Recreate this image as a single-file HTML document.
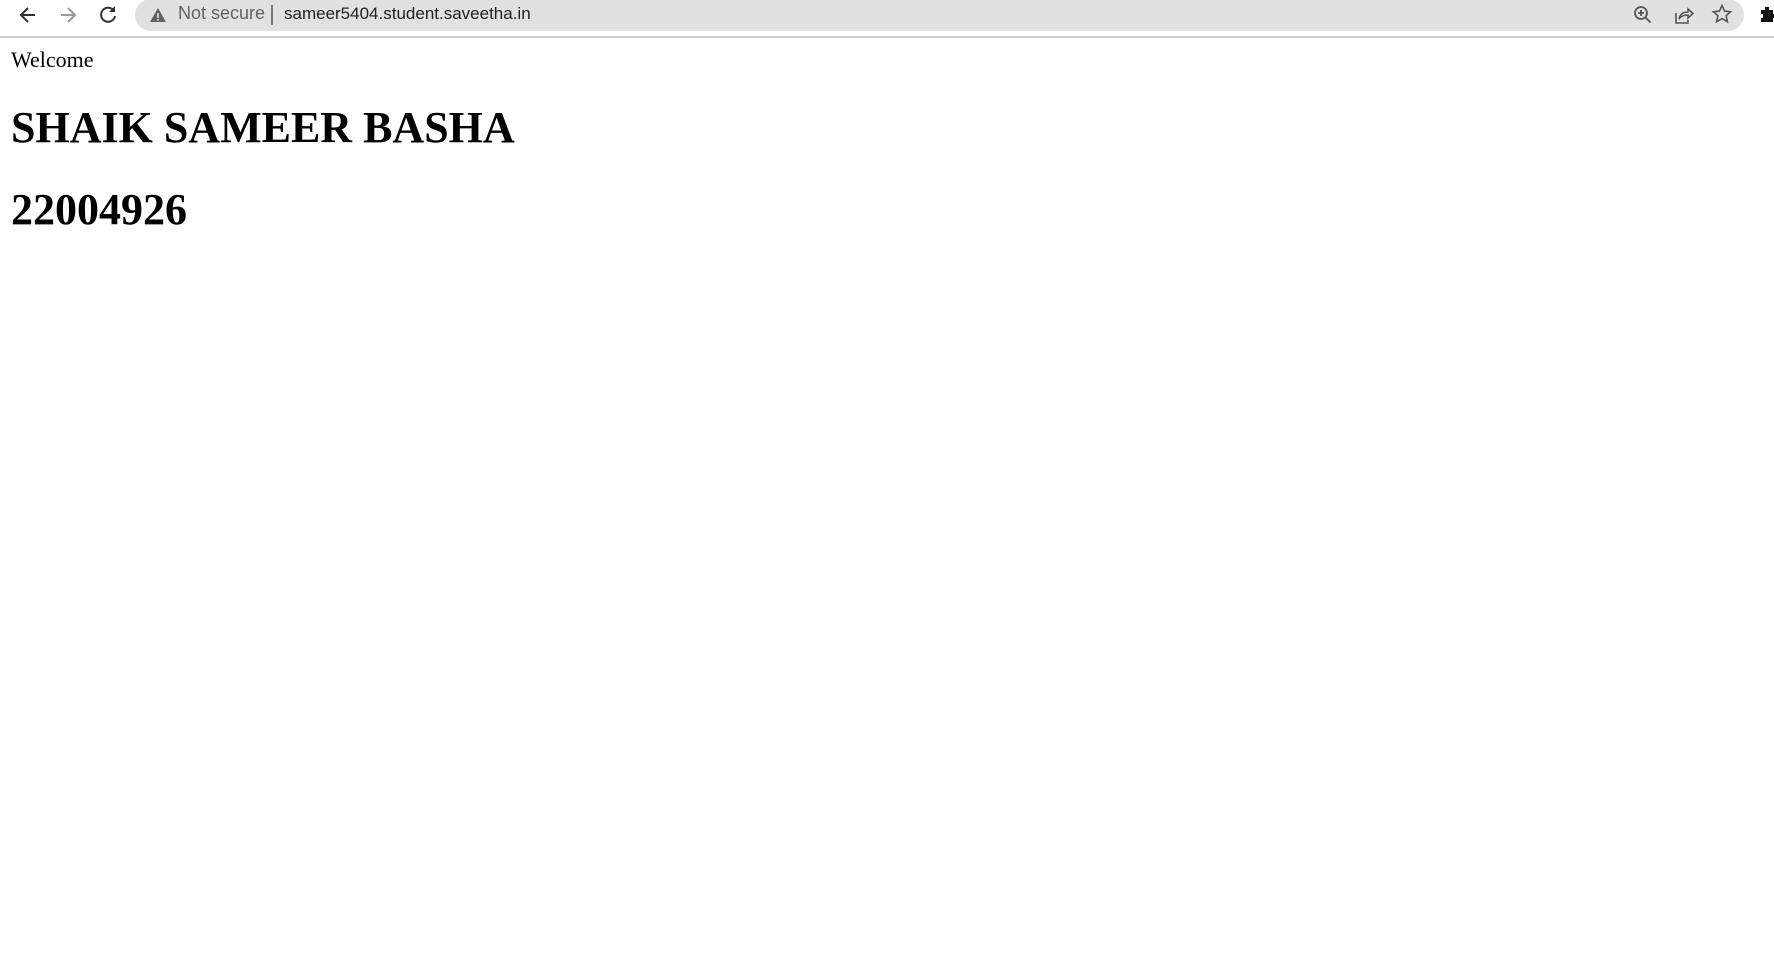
<!DOCTYPE html>
<html><head><meta charset="utf-8"><style>
html,body{margin:0;padding:0;background:#fff;width:1774px;height:962px;overflow:hidden;position:relative}
.bar{position:absolute;left:0;top:0;width:1774px;height:36px;background:#fff;border-bottom:2px solid #d0d0d0}
.pill{position:absolute;left:135px;width:1609px;background:#e1e1e1;border-radius:16px;top:-1px;height:32px}
.t{position:absolute;font-family:"Liberation Sans",sans-serif;font-size:18px;top:3px;white-space:nowrap}
.s{position:absolute;left:11px;font-family:"Liberation Serif",serif;color:#000;white-space:nowrap;line-height:normal}
svg{position:absolute}
</style></head><body>
<div class="bar">
<svg style="left:17px;top:4px" width="22" height="22" viewBox="0 0 22 22"><path d="M18 11H5M11 4l-7 7 7 7" fill="none" stroke="#333" stroke-width="2"/></svg>
<svg style="left:57px;top:4px" width="22" height="22" viewBox="0 0 22 22"><path d="M4 11h13M11 4l7 7-7 7" fill="none" stroke="#999" stroke-width="2"/></svg>
<svg style="left:97px;top:3px" width="22" height="22" viewBox="0 0 22 22"><path d="M17 8A7 7 0 1 0 18 13" fill="none" stroke="#333" stroke-width="2"/><path d="M18 3v6h-6z" fill="#333"/></svg>
<div class="pill"></div>
<svg style="left:149px;top:6px" width="18" height="18" viewBox="0 0 18 18"><path d="M9 2L17 16H1z" fill="#5f6368"/><rect x="8.2" y="7" width="1.6" height="5" fill="#e1e1e1"/><rect x="8.2" y="13" width="1.6" height="1.6" fill="#e1e1e1"/></svg>
<div class="t" style="left:178px;color:#5f6368">Not secure</div>
<div style="position:absolute;left:271px;top:5px;width:2px;height:20px;background:#777"></div>
<div class="t" style="left:284px;color:#202124;font-size:17px;top:4px">sameer5404.student.saveetha.in</div>
<svg style="left:1632px;top:4px" width="22" height="22" viewBox="0 0 22 22"><circle cx="9" cy="9" r="6" fill="none" stroke="#555" stroke-width="1.8"/><path d="M13.5 13.5l5 5M9 6v6M6 9h6" stroke="#555" stroke-width="1.8"/></svg>
<svg style="left:1672px;top:4px" width="22" height="22" viewBox="0 0 22 22"><path d="M4 9v10h12v-3" fill="none" stroke="#555" stroke-width="1.6"/><path d="M7 15c1-5 4-7 9-7V5l5 4.5-5 4.5v-3c-4 0-7 1-9 4z" fill="none" stroke="#555" stroke-width="1.6"/></svg>
<svg style="left:1711px;top:3px" width="22" height="22" viewBox="0 0 22 22"><path d="M11 2.5l2.6 5.6 6 .6-4.5 4 1.3 6-5.4-3.2-5.4 3.2 1.3-6-4.5-4 6-.6z" fill="none" stroke="#555" stroke-width="1.6"/></svg>
<svg style="left:1758px;top:4px" width="20" height="20" viewBox="0 0 20 20"><path d="M3 6h4V3h4v3h4v4h2v4h-2v4H3v-4h2v-4H3z" fill="#111"/></svg>
</div>
<div class="s" style="top:47px;font-size:22px">Welcome</div>
<div class="s" style="top:102px;font-size:44px;font-weight:bold">SHAIK SAMEER BASHA</div>
<div class="s" style="top:184px;font-size:44px;font-weight:bold">22004926</div>
</body></html>
